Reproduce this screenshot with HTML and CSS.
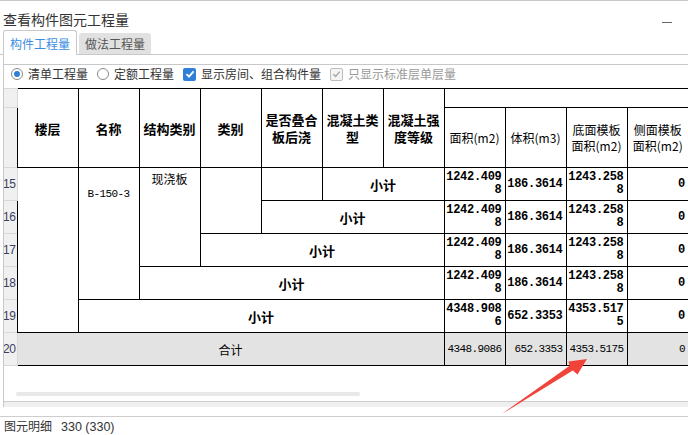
FILE: index.html
```html
<!DOCTYPE html>
<html lang="zh">
<head>
<meta charset="utf-8">
<title>查看构件图元工程量</title>
<link rel="stylesheet" href="styles.css">
</head>
<body>
<div class="titlebar"><span class="title">查看构件图元工程量</span><span class="min"></span></div>
<div class="tabs">
  <div class="tab active">构件工程量</div>
  <div class="tab">做法工程量</div>
</div>
<div class="panel">
  <div class="toolbar">
    <span class="opt"><span class="radio on"></span>清单工程量</span>
    <span class="opt"><span class="radio"></span>定额工程量</span>
    <span class="opt"><span class="check on"><svg viewBox="0 0 12 12" width="12" height="12"><path d="M2.5 6.2 L5 8.6 L9.6 3.4" fill="none" stroke="#fff" stroke-width="1.8"/></svg></span>显示房间、组合构件量</span>
    <span class="opt disabled"><span class="check off"><svg viewBox="0 0 12 12" width="12" height="12"><path d="M2.5 6.2 L5 8.6 L9.6 3.4" fill="none" stroke="#a8a8a8" stroke-width="1.6"/></svg></span>只显示标准层单层量</span>
  </div>
  <div class="grid-wrap">
    <table class="grid">
      <colgroup>
        <col class="g"><col class="c"><col class="c"><col class="c"><col class="c"><col class="c"><col class="c"><col class="c"><col class="c"><col class="c"><col class="c"><col class="c">
      </colgroup>
      <thead>
        <tr class="h1">
          <th class="gut"></th>
          <th rowspan="2">楼层</th>
          <th rowspan="2">名称</th>
          <th rowspan="2">结构类别</th>
          <th rowspan="2">类别</th>
          <th rowspan="2">是否叠合板后浇</th>
          <th rowspan="2">混凝土类型</th>
          <th rowspan="2">混凝土强度等级</th>
          <th colspan="4" class="last"></th>
        </tr>
        <tr class="h2">
          <th class="gut"></th>
          <th class="sub">面积(m2)</th>
          <th class="sub">体积(m3)</th>
          <th class="sub">底面模板面积(m2)</th>
          <th class="sub last">侧面模板面积(m2)</th>
        </tr>
      </thead>
      <tbody>
        <tr>
          <td class="gut">15</td>
          <td rowspan="5"></td>
          <td rowspan="4" class="name">B-150-3</td>
          <td rowspan="3" class="kind">现浇板</td>
          <td rowspan="2"></td>
          <td></td>
          <td colspan="2" class="sub-total">小计</td>
          <td class="n">1242.4098</td>
          <td class="n">186.3614</td>
          <td class="n">1243.2588</td>
          <td class="n last">0</td>
        </tr>
        <tr>
          <td class="gut">16</td>
          <td colspan="3" class="sub-total">小计</td>
          <td class="n">1242.4098</td>
          <td class="n">186.3614</td>
          <td class="n">1243.2588</td>
          <td class="n last">0</td>
        </tr>
        <tr>
          <td class="gut">17</td>
          <td colspan="4" class="sub-total">小计</td>
          <td class="n">1242.4098</td>
          <td class="n">186.3614</td>
          <td class="n">1243.2588</td>
          <td class="n last">0</td>
        </tr>
        <tr>
          <td class="gut">18</td>
          <td colspan="5" class="sub-total">小计</td>
          <td class="n">1242.4098</td>
          <td class="n">186.3614</td>
          <td class="n">1243.2588</td>
          <td class="n last">0</td>
        </tr>
        <tr>
          <td class="gut">19</td>
          <td colspan="6" class="sub-total">小计</td>
          <td class="n">4348.9086</td>
          <td class="n">652.3353</td>
          <td class="n">4353.5175</td>
          <td class="n last">0</td>
        </tr>
        <tr class="total">
          <td class="gut">20</td>
          <td colspan="7" class="total-label">合计</td>
          <td class="n">4348.9086</td>
          <td class="n">652.3353</td>
          <td class="n">4353.5175</td>
          <td class="n last">0</td>
        </tr>
      </tbody>
    </table>
  </div>
  <div class="hscroll"><div class="thumb"></div></div>
  <div class="band"></div>
</div>
<div class="status">图元明细<span class="count">330 (330)</span></div>
<svg class="arrow" width="688" height="435" viewBox="0 0 688 435">
  <polygon points="587,359 568.5,361.5 569.6,365.8 502,413.8 572.8,370.6 577.5,374.5" fill="#f0443a"/>
</svg>
</body>
</html>
```
FILE: styles.css
```css
* { box-sizing: border-box; }
html, body { margin: 0; padding: 0; }
body {
  width: 688px;
  height: 435px;
  overflow: hidden;
  background: #fff;
  font-family: "Noto Sans CJK SC", "Noto Sans", sans-serif;
  color: #333;
  position: relative;
}

.titlebar {
  height: 30px;
  border-top: 1px solid #c8c8c8;
  display: flex;
  justify-content: space-between;
  align-items: flex-start;
}
.title {
  font-size: 14px;
  line-height: 20px;
  margin: 8px 0 0 3px;
  color: #333;
}
.min {
  width: 10px;
  height: 1px;
  background: #666;
  margin: 21px 16px 0 0;
}

.tabs {
  height: 25px;
  display: flex;
  align-items: flex-end;
  padding-left: 3px;
  border-bottom: 1px solid #c8c8c8;
}
.tab {
  display: flex;
  align-items: center;
  justify-content: center;
  font-size: 12px;
  border-radius: 3px 3px 0 0;
}
.tab.active {
  width: 74px;
  height: 25px;
  margin-bottom: -1px;
  border: 1px solid #c8c8c8;
  border-bottom: none;
  background: #fff;
  color: #3a8ee0;
  position: relative;
  z-index: 1;
}
.tab:not(.active) {
  width: 72px;
  height: 21px;
  margin-left: 2px;
  background: #e1e1e1;
  color: #555;
}

.panel {
  margin-left: 3px;
  border-left: 1px solid #c8c8c8;
  padding-top: 9px;
}
.toolbar {
  height: 24px;
  border-top: 1px solid #c8c8c8;
  padding: 0 0 5px 7px;
  display: flex;
  align-items: center;
  font-size: 12px;
  color: #333;
}
.opt {
  display: flex;
  align-items: center;
  gap: 5px;
  margin-right: 9px;
  line-height: 16px;
}
.opt.disabled { color: #9a9a9a; }
.radio {
  width: 12px;
  height: 12px;
  border-radius: 50%;
  border: 1px solid #8a8a8a;
  background: #fff;
  display: flex;
  align-items: center;
  justify-content: center;
}
.radio.on::after {
  content: "";
  width: 6px;
  height: 6px;
  border-radius: 50%;
  background: #2f7fd8;
}
.check {
  width: 13px;
  height: 13px;
  border-radius: 2px;
  display: flex;
  align-items: center;
  justify-content: center;
}
.check.on { background: #2f7fd8; }
.check.off { border: 1px solid #bdbdbd; background: #f4f4f4; }

.grid-wrap {
  width: 684px;
  overflow: hidden;
}
.grid {
  border-collapse: collapse;
  table-layout: fixed;
  width: 684px;
}
.grid col.g { width: 13px; }
.grid col.c { width: 61px; }
.grid th, .grid td {
  border: 1px solid #000;
  padding: 0;
  overflow: hidden;
  color: #000;
}
.grid .last { border-right: none; }
.grid tr.h1 th { height: 19px; }
.grid tr.h2 th { height: 60px; }
.grid tbody td { height: 33px; }
.grid th {
  font-size: 13px;
  font-weight: bold;
  line-height: 17px;
  padding: 0 2px;
  text-align: center;
  vertical-align: middle;
}
.grid th.sub {
  font-weight: normal;
  font-size: 12px;
  line-height: 16px;
}
.grid .gut {
  border: 1px solid #d8d8d8;
  border-left: none;
  background: #f0f0f0;
  font-size: 12px;
  font-weight: normal;
  text-align: left;
  color: #3e3e5e;
  padding: 0;
  text-indent: -1px;
  overflow: visible;
  white-space: nowrap;
  letter-spacing: -0.3px;
  font-family: "Liberation Sans", sans-serif;
}
.grid .name {
  vertical-align: top;
  text-align: center;
  padding-top: 20px;
  font-family: "Liberation Mono", monospace;
  font-size: 11px;
  letter-spacing: -0.6px;
  line-height: 13px;
}
.grid .kind {
  vertical-align: top;
  text-align: center;
  padding-top: 3px;
  font-size: 12px;
  line-height: 16px;
}
.grid .sub-total {
  text-align: center;
  font-weight: bold;
  font-size: 13px;
}
.grid td.n {
  text-align: right;
  font-family: "Liberation Mono", monospace;
  font-weight: bold;
  font-size: 12px;
  letter-spacing: -0.3px;
  line-height: 13px;
  padding: 0 3px 0 1px;
  word-break: break-all;
  vertical-align: middle;
}
.grid tr.total td { background: #e3e3e3; }
.grid tr.total td.gut { background: #f0f0f0; }
.grid tr.total td.n {
  font-weight: normal;
  font-size: 11px;
  letter-spacing: -0.6px;
}
.grid .total-label {
  text-align: center;
  font-size: 12px;
}

.hscroll {
  height: 35px;
  padding: 26px 0 0 12px;
}
.thumb {
  width: 344px;
  height: 4px;
  border-radius: 2px;
  background: #e8e8e8;
}
.band {
  height: 6px;
  border-top: 1px solid #cdcdcd;
  background: #efefef;
}

.status {
  margin-top: 9px;
  border-top: 1px solid #cdcdcd;
  padding-left: 4px;
  font-size: 12px;
  line-height: 17px;
  color: #333;
}
.status .count {
  margin-left: 9px;
  font-family: "Liberation Sans", sans-serif;
  font-size: 12.5px;
}

.arrow {
  position: absolute;
  left: 0;
  top: 0;
  pointer-events: none;
}
```
